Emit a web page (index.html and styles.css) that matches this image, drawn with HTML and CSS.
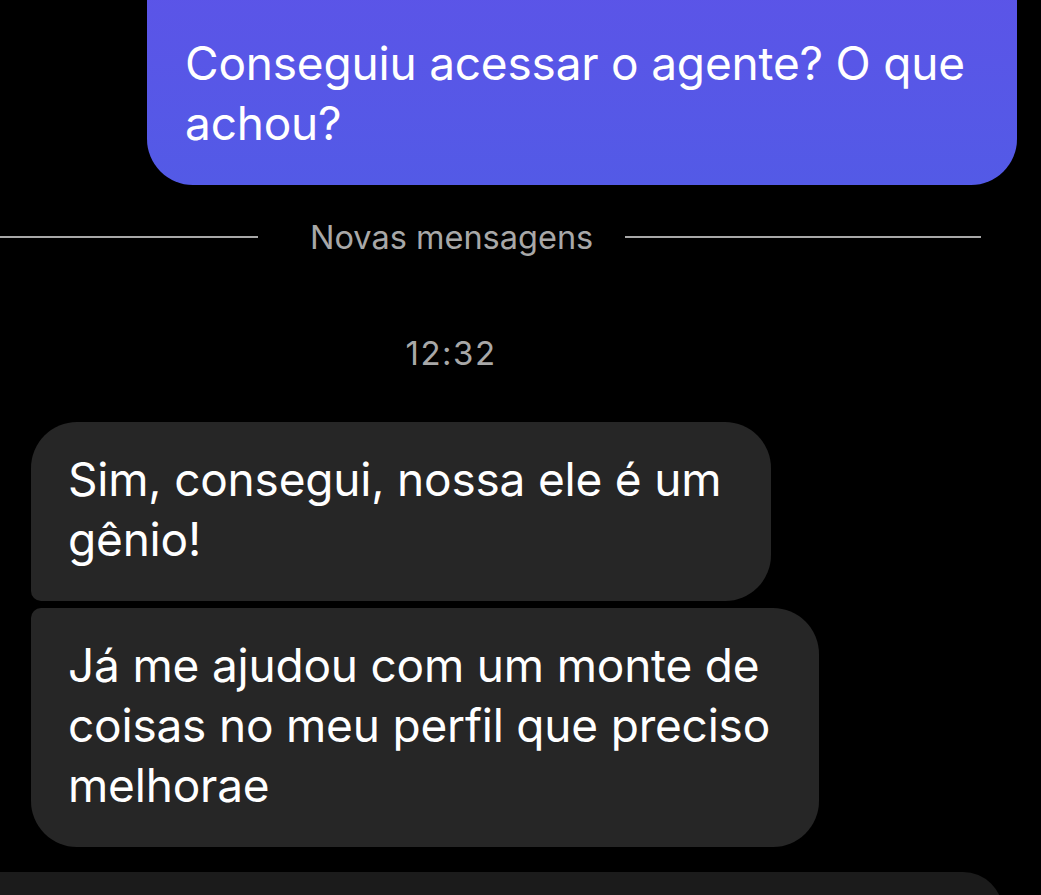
FILE: index.html
```html
<!DOCTYPE html>
<html lang="pt-BR">
<head>
<meta charset="utf-8">
<title>Chat</title>
<link rel="stylesheet" href="styles.css">
</head>
<body>
<main class="chat">
  <div class="row row-out">
    <div class="bubble bubble-out">Conseguiu acessar o agente? O que achou?</div>
  </div>
  <div class="divider">
    <span class="divider-line divider-left"></span>
    <span class="divider-text">Novas mensagens</span>
    <span class="divider-line divider-right"></span>
  </div>
  <div class="timestamp">12:32</div>
  <div class="group-in">
    <div class="bubble bubble-in bubble-first">Sim, consegui, nossa ele é um gênio!</div>
    <div class="bubble bubble-in bubble-last">Já me ajudou com um monte de coisas no meu perfil que preciso melhorae</div>
  </div>
  <div class="composer"></div>
</main>
</body>
</html>
```
FILE: styles.css
```css
* { box-sizing: border-box; }
html, body {
  margin: 0;
  background: #000;
}
body {
  width: 1041px;
  height: 895px;
  overflow: hidden;
  font-family: Inter, "Noto Sans", "Liberation Sans", sans-serif;
  color: #fff;
}
.chat {
  display: flex;
  flex-direction: column;
}
.row-out {
  display: flex;
  justify-content: flex-end;
  padding-right: 24px;
}
.bubble {
  font-size: 46px;
  line-height: 60px;
  letter-spacing: -0.2px;
}
.bubble-out {
  width: 870px;
  margin-top: -60px;
  padding: 93px 38px 32px 38px;
  border-radius: 46px;
  background: linear-gradient(180deg, #5d53e8 0%, #535ae6 100%);
}
.divider {
  display: flex;
  align-items: center;
  width: 981px;
  margin-top: 35px;
  height: 34px;
}
.divider-line {
  height: 2px;
  background: #a8a8a8;
}
.divider-left { width: 258px; flex: none; }
.divider-right { flex: 1; }
.divider-text {
  margin: 0 32px 0 52px;
  font-size: 32.5px;
  color: #a8a8a8;
  white-space: nowrap;
}
.timestamp {
  width: 902px;
  text-align: center;
  margin-top: 82px;
  font-size: 33px;
  line-height: 34px;
  letter-spacing: 1.5px;
  color: #a8a8a8;
}
.group-in {
  display: flex;
  flex-direction: column;
  align-items: flex-start;
  gap: 7px;
  margin-top: 52px;
  padding-left: 31px;
}
.bubble-in {
  background: #262626;
  padding: 27px 37px 32px 37px;
}
.bubble-first {
  width: 740px;
  border-radius: 46px 46px 46px 10px;
}
.bubble-last {
  width: 788px;
  border-radius: 10px 46px 46px 46px;
}
.composer {
  margin-top: 25px;
  margin-left: -40px;
  width: 1043px;
  height: 80px;
  background: #1b1b1b;
  border-radius: 46px;
}
```
